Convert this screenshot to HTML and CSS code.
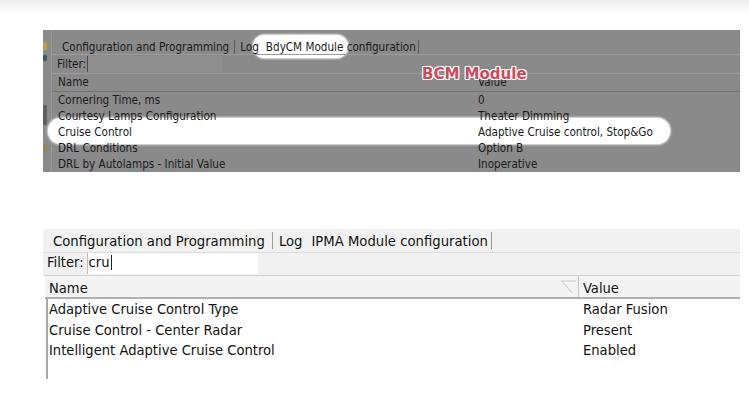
FILE: index.html
```html
<!DOCTYPE html>
<html>
<head><title>Module configuration</title>
<link rel="stylesheet" href="styles.css">
</head>
<body>
<div class="fade"></div>

<!-- BdyCM tab, dimmed with the two highlights -->
<div class="shot bcm">
  <span class="mark mark-tab"></span>
  <span class="mark mark-row"></span>
  <span class="label">BCM Module</span>

  <div class="side">
    <span class="bit yellow"></span>
    <span class="bit teal"></span>
    <span class="bit dark"></span>
    <span class="bit olive"></span>
  </div>

  <div class="main">
    <div class="tabs">
      <span class="tab">Configuration and Programming</span>
      <span class="tab plain">Log</span>
      <span class="tab active">BdyCM Module configuration</span>
    </div>
    <div class="filter">
      <span>Filter:</span>
      <span class="field"></span>
    </div>
    <div class="row head">
      <span class="name">Name</span>
      <span class="value">Value</span>
    </div>
    <div class="row"><span class="name">Cornering Time, ms</span><span class="value">0</span></div>
    <div class="row"><span class="name">Courtesy Lamps Configuration</span><span class="value">Theater Dimming</span></div>
    <div class="row"><span class="name">Cruise Control</span><span class="value">Adaptive Cruise control, Stop&amp;Go</span></div>
    <div class="row"><span class="name">DRL Conditions</span><span class="value">Option B</span></div>
    <div class="row"><span class="name">DRL by Autolamps - Initial Value</span><span class="value">Inoperative</span></div>
  </div>
</div>

<!-- IPMA tab, filtered on "cru" -->
<div class="shot ipma">
  <div class="tabs">
    <span class="tab">Configuration and Programming</span>
    <span class="tab plain">Log</span>
    <span class="tab active">IPMA Module configuration</span>
  </div>
  <div class="filter">
    <span>Filter:</span>
    <span class="field">cru<span class="caret"></span></span>
  </div>
  <div class="row head">
    <span class="name">Name
      <svg class="sort" width="18" height="16" viewBox="0 0 18 16">
        <path d="M1 2 H16 M2 2 L12 14" stroke="#c9c9c9" stroke-width="1" fill="none"/>
      </svg>
    </span>
    <span class="value">Value</span>
  </div>
  <div class="list">
    <div class="row"><span class="name">Adaptive Cruise Control Type</span><span class="value">Radar Fusion</span></div>
    <div class="row"><span class="name">Cruise Control - Center Radar</span><span class="value">Present</span></div>
    <div class="row"><span class="name">Intelligent Adaptive Cruise Control</span><span class="value">Enabled</span></div>
  </div>
</div>

</body>
</html>
```

FILE: styles.css
```css
body {
  margin: 0;
  background: #fff;
  font-family: "DejaVu Sans Condensed", "DejaVu Sans", Verdana, sans-serif;
  color: #1c1c1c;
}

.fade {
  height: 16px;
  background: linear-gradient(#efefef, #fff);
}

.shot {
  width: 697px;
  margin-left: 43px;
}

/* ---------- dimmed BdyCM screen ---------- */

.bcm {
  position: relative;
  display: flex;
  height: 142px;
  margin-top: 14px;
  overflow: hidden;
  background: #8a8a8a;
  font-size: 11.6px;
  color: #1a1a1a;
}

.side {
  width: 8px;
  border-right: 1px solid #989898;
  display: flex;
  flex-direction: column;
  align-items: flex-start;
}

.bit {
  display: block;
  width: 4px;
  border-radius: 1px;
}

.bit.yellow { height: 8px; margin-top: 12px; background: #b8a23a; }
.bit.teal   { height: 6px; margin-top: 5px;  background: #3f5a66; }
.bit.dark   { height: 20px; margin-top: 44px; background: #5d625e; }
.bit.olive  { height: 7px; margin-top: 20px; background: #8f8a52; }

.main {
  flex: 1;
  position: relative;
  z-index: 1;
}

.bcm .tabs {
  display: flex;
  align-items: flex-end;
  height: 19px;
  margin-top: 5px;
  padding-left: 5px;
  border-bottom: 1px solid #9c9c9c;
}

.bcm .tab {
  line-height: 14px;
  padding: 0 5px;
  border-right: 1px solid #5c5c5c;
}

.bcm .tab.plain { border-right: none; }
.bcm .tab.active { padding: 0 2px 0 2px; }

.bcm .filter {
  display: flex;
  align-items: center;
  height: 18px;
  padding-left: 5px;
  border-bottom: 1px solid #9c9c9c;
}

.bcm .field {
  width: 134px;
  height: 16px;
  margin-left: 1px;
  border-left: 1px solid #4a4a4a;
  background: #8f8f8f;
}

.bcm .row {
  display: flex;
  height: 16px;
  line-height: 16px;
}

.bcm .row.head {
  height: 17px;
  line-height: 17px;
  border-bottom: 1px solid #727272;
}

.bcm .name {
  width: 420px;
  padding-left: 6px;
}

/* white highlights drawn over the screenshot */
.mark {
  position: absolute;
  background: #fff;
  box-shadow: 0 0 2px 1px rgba(255, 255, 255, 0.8);
}

.mark-tab {
  left: 210px;
  top: 5px;
  width: 95px;
  height: 23px;
  border-radius: 12px;
}

.mark-row {
  left: 5px;
  top: 88px;
  width: 622px;
  height: 26px;
  border-radius: 13px;
}

.label {
  position: absolute;
  z-index: 2;
  left: 379px;
  top: 35px;
  font-family: "DejaVu Sans", Verdana, sans-serif;
  font-size: 15px;
  font-weight: bold;
  color: #cc4a5e;
  text-shadow: 1px 0 #fff, -1px 0 #fff, 0 1px #fff, 0 -1px #fff,
    1px 1px #fff, -1px -1px #fff, 1px -1px #fff, -1px 1px #fff;
}

/* ---------- IPMA screen ---------- */

.ipma {
  margin-top: 57px;
  font-size: 14.6px;
  color: #111;
}

.ipma .tabs {
  display: flex;
  align-items: center;
  height: 23px;
  padding-left: 3px;
  background: #f1f1f1;
  border-bottom: 1px solid #dcdcdc;
  font-size: 14.7px;
}

.ipma .tab {
  line-height: 17px;
  padding: 0 7px;
  border-right: 1px solid #9a9a9a;
}

.ipma .tab.plain { border-right: none; padding: 0 6px 0 6px; }
.ipma .tab.active { padding: 0 3px 0 3px; }

.ipma .filter {
  display: flex;
  align-items: flex-start;
  height: 22px;
  line-height: 17px;
  padding-left: 4px;
  background: #f1f1f1;
  border-bottom: 1px solid #d2d2d2;
}

.ipma .field {
  display: flex;
  align-items: flex-start;
  width: 169px;
  height: 21px;
  margin-left: 3px;
  padding-left: 1px;
  border-left: 1px solid #bdbdbd;
  background: #fff;
}

.caret {
  display: inline-block;
  width: 1px;
  height: 15px;
  margin: 2px 0 0 1px;
  background: #222;
}

.ipma .row {
  display: flex;
  height: 20.5px;
  line-height: 20.5px;
}

.ipma .row.head {
  height: 21px;
  line-height: 23px;
  margin-left: 2px;
  background: #f3f3f3;
  border-bottom: 2px solid #b0b0b0;
}

.ipma .name {
  position: relative;
  width: 535px;
  padding-left: 4px;
  box-sizing: border-box;
}

.ipma .head .name {
  width: 534px;
  border-right: 1px solid #c8c8c8;
  padding-left: 4px;
}

.ipma .head .value { padding-left: 4px; }

.sort {
  position: absolute;
  right: 0;
  top: 3px;
}

.list {
  height: 80px;
  margin-left: 3px;
  border-left: 2px solid #a8a8a8;
}

.list .name { padding-left: 1px; }
```
